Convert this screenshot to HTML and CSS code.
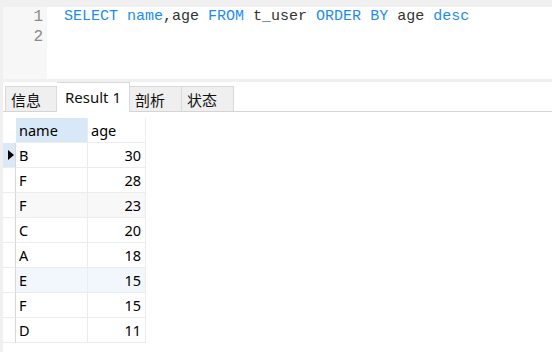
FILE: index.html
```html
<!DOCTYPE html>
<html lang="zh">

<head>
    <meta charset="UTF-8">
    <title>Query</title>
    <link rel="stylesheet" href="styles.css">
</head>

<body>
    <div class="page">
        <div class="editor">
            <div class="gutter">
                <div>1</div>
                <div>2</div>
            </div>
            <div class="code">
                <div><span class="kw">SELECT</span> <span class="kw">name</span>,age <span class="kw">FROM</span> t_user <span class="kw">ORDER</span> <span class="kw">BY</span> age <span class="kw">desc</span></div>
                <div>&nbsp;</div>
            </div>
        </div>

        <div class="results">
            <div class="tabs">
                <div class="tab">信息</div>
                <div class="tab active">Result 1</div>
                <div class="tab">剖析</div>
                <div class="tab">状态</div>
            </div>

            <div class="grid">
                <div class="row head">
                    <div class="ind"></div>
                    <div class="cell sel">name</div>
                    <div class="cell">age</div>
                </div>
                <div class="row">
                    <div class="ind cur"><span class="arrow"></span></div>
                    <div class="cell">B</div>
                    <div class="cell num">30</div>
                </div>
                <div class="row">
                    <div class="ind"></div>
                    <div class="cell">F</div>
                    <div class="cell num">28</div>
                </div>
                <div class="row alt">
                    <div class="ind"></div>
                    <div class="cell">F</div>
                    <div class="cell num">23</div>
                </div>
                <div class="row">
                    <div class="ind"></div>
                    <div class="cell">C</div>
                    <div class="cell num">20</div>
                </div>
                <div class="row">
                    <div class="ind"></div>
                    <div class="cell">A</div>
                    <div class="cell num">18</div>
                </div>
                <div class="row hover">
                    <div class="ind"></div>
                    <div class="cell">E</div>
                    <div class="cell num">15</div>
                </div>
                <div class="row">
                    <div class="ind"></div>
                    <div class="cell">F</div>
                    <div class="cell num">15</div>
                </div>
                <div class="row">
                    <div class="ind"></div>
                    <div class="cell">D</div>
                    <div class="cell num">11</div>
                </div>
            </div>
        </div>
    </div>
</body>

</html>
```

FILE: styles.css
```css
body {
    margin: 0;
    padding: 0;
    background-color: #f0f0f0;
    font-family: "Noto Sans", "Noto Sans CJK SC", sans-serif;
    color: #000;
}

.page {
    height: 352px;
    padding: 7px 0 0 3px;
    box-sizing: border-box;
    overflow: hidden;
}

/* sql editor */
.editor {
    display: flex;
    height: 72px;
    background-color: #fff;
    font-family: "Liberation Mono", monospace;
    font-size: 15px;
    line-height: 20px;
}

.gutter {
    width: 44px;
    background-color: #f7f7f7;
    color: #8a8a8a;
    text-align: right;
    padding-right: 4px;
    box-sizing: border-box;
    font-size: 16px;
}

.code {
    padding-left: 17px;
    color: #333;
    white-space: nowrap;
}

.kw {
    color: #1c8cf0;
}

/* result panel */
.results {
    margin-top: 3px;
    background-color: #fff;
    height: 270px;
}

.tabs {
    display: flex;
    align-items: flex-end;
    height: 29px;
    padding-left: 2px;
    border-bottom: 1px solid #d4d4d4;
}

.tab {
    height: 25px;
    width: 52px;
    box-sizing: border-box;
    border: 1px solid #d9d9d9;
    border-bottom: none;
    border-left: none;
    background-color: #efefef;
    padding-left: 5px;
    font-size: 15px;
    line-height: 25px;
    font-family: "Noto Sans CJK SC", sans-serif;
    color: #111;
}

.tab:first-child {
    border-left: 1px solid #d9d9d9;
}

.tab.active {
    width: 73px;
    height: 30px;
    margin-bottom: -1px;
    background-color: #fff;
    padding-left: 8px;
    line-height: 28px;
    font-family: "Noto Sans", sans-serif;
    font-size: 15px;
}

.grid {
    padding-top: 6px;
    font-size: 14.5px;
}

.row {
    display: flex;
    height: 25px;
    line-height: 24px;
}

.ind {
    width: 13px;
    box-sizing: border-box;
    border-right: 1px solid #d8d8d8;
    border-bottom: 1px solid #ececec;
    position: relative;
}

.head .ind {
    border-color: transparent;
}

.ind.cur {
    background-color: #dae9f7;
}

.arrow {
    position: absolute;
    left: 5px;
    top: 7px;
    border-left: 6px solid #000;
    border-top: 5px solid transparent;
    border-bottom: 5px solid transparent;
}

.cell {
    box-sizing: border-box;
    border-right: 1px solid #ececec;
    border-bottom: 1px solid #ececec;
    padding-left: 3px;
    width: 58px;
}

.cell:nth-child(2) {
    width: 72px;
}

.cell.sel {
    background-color: #d9e8f7;
}

.cell.num {
    text-align: right;
    padding-right: 4px;
}

.alt .cell {
    background-color: #f8f8f8;
}

.hover .cell {
    background-color: #f1f7fd;
}
```
